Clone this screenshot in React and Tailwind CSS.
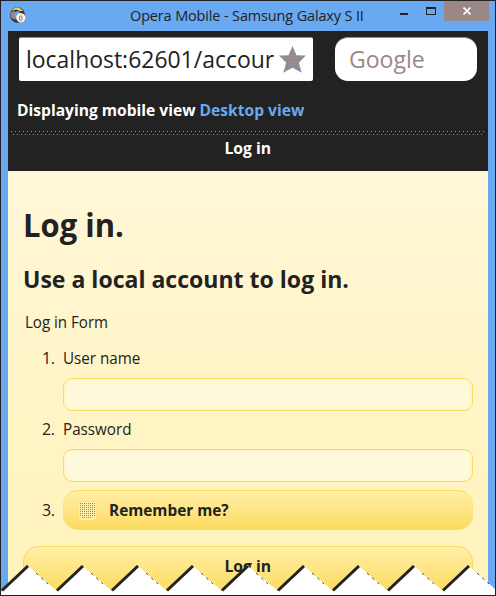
import React from "react";

const font = "font-['Open_Sans','Noto_Sans',sans-serif]";

function TitleBar() {
  return (
    <div className="flex h-[30px] shrink-0 items-start">
      <svg className="ml-[9px] mt-[6px] shrink-0" width="16" height="17" viewBox="0 0 16 17">
        <ellipse cx="7.500" cy="8" rx="5.400" ry="5.700" fill="none" stroke="#3a3230" strokeWidth="4" />
        <path d="M2 4C5-1 10 0 13 4L10 4 6 2.500Z" fill="#e9d27a" />
        <path d="M1 5l4-1-1 5 2 4C1 12 0 9 1 5Z" fill="#9b8785" />
        <circle cx="10.8" cy="10.8" r="4.6" fill="#fff8dc" />
        <rect x="9.6" y="8.8" width="2.4" height="4.6" rx="1" fill="none" stroke="#7b6c66" />
      </svg>
      <div className="ml-[104px] mt-[5px] w-[265px] whitespace-nowrap text-[14.5px] leading-5">
        <span className="tracking-[-0.15px]">Opera Mobile - Samsung Galaxy S II</span>
      </div>
      <div className="mt-[12px] ml-[5px] h-[2px] w-2 bg-[#222]" />
      <div className="ml-[18px] mt-[6px] h-2 w-[10px] border border-t-2 border-[#222]" />
      <div className="ml-[8px] flex h-5 w-[45px] items-center justify-center bg-[#9b8785]">
        <svg width="8" height="8" viewBox="0 0 8 8" stroke="#fff" strokeWidth="1.7">
          <path d="M.5.5l7 7m0-7l-7 7" />
        </svg>
      </div>
    </div>
  );
}

function Header() {
  return (
    <header className="flex h-[140px] shrink-0 flex-col bg-[#222] text-white">
      <div className="flex pt-[6px] pl-[11px]">
        <div className="flex h-11 w-[294px] items-center overflow-hidden rounded-[2px] border-t border-[#9b8785] bg-white pl-[7px] text-[#222]">
          <div className="-mt-[3px] w-[248px] overflow-hidden whitespace-nowrap text-[24px] leading-[41px]">
            <span className="inline-block origin-left scale-x-[0.956]">localhost:62601/accour</span>
          </div>
          <svg className="ml-[5px]" width="27" height="27" viewBox="0 0 27 27">
            <defs>
              <pattern id="dots" width="3" height="3" patternUnits="userSpaceOnUse">
                <rect width="3" height="3" fill="#9b8785" />
                <rect x="0" y="0" width="1" height="1" fill="#68a9f1" />
              </pattern>
            </defs>
            <path d="M13.500 0l4 9.200 9.300.3-7 7.200 3 10-9.300-5L4.200 26.700l3-10L0 9.500l9.500-.3Z" fill="url(#dots)" />
          </svg>
        </div>
        <div className="ml-[22px] h-11 w-[142px] rounded-[13px] border-t border-[#9b8785] bg-white pl-[14px] text-[24px] leading-[41px] text-[#9b8785]">
          <span className="inline-block origin-left scale-x-[0.96]">Google</span>
        </div>
      </div>
      <div className="mt-[18px] h-[22px] whitespace-nowrap pl-[9px] text-[16px] font-bold leading-[22px]">
        <div className="inline-block origin-left scale-x-[0.974]">
          <span>Displaying mobile view </span>
          <a className="text-[#68a9f1]">Desktop view</a>
        </div>
      </div>
      <svg className="ml-[3px] mt-[10px] shrink-0" width="474" height="4">
        <path d="M0 .5H474M2 3.500H474" stroke="#9b8785" strokeDasharray="1 3" />
      </svg>
      <div className="mt-[2px] pr-px text-center text-[16px] font-bold leading-[22px]">
        <span className="inline-block scale-x-[0.98]">Log in</span>
      </div>
    </header>
  );
}

function Field({ number, label }) {
  return (
    <li className="h-[71px]">
      <div className="flex h-5 text-[16px] leading-5">
        <span className="w-[21px] tracking-[-0.5px]">{number}.</span>
        <span className="origin-left scale-x-[0.95]">{label}</span>
      </div>
      <div className="ml-[21px] mt-[10px] h-[33px] w-[410px] rounded-[9px] border border-[#f9dc5c] bg-[#fff9dc] shadow-[inset_0_0_4px_#fff1b6]" />
    </li>
  );
}

function TornEdge() {
  const peaks = [28, 83, 138, 193, 248, 304, 359, 414, 469];
  const outline = peaks.map((x) => `L${x - 26} 26L${x} 1`).join("");
  return (
    <svg className="absolute bottom-0 left-0" width="494" height="30" viewBox="1 0 494 30">
      <path d={`M1 30V26${outline}L495 24V30Z`} fill="#fff" />
      {peaks.map((x) => (
        <g key={x} stroke="#222" fill="none">
          <path d={`M${x - 26} 25.500L${x} 1`} strokeWidth="3" />
          <path d={`M${x + 8} 8L${x + 20} 19`} strokeWidth="0.8" strokeDasharray="3 4" />
        </g>
      ))}
    </svg>
  );
}

export default function App() {
  return (
    <div className={`relative flex h-[596px] w-[496px] flex-col overflow-hidden border border-[#222] bg-[#68a9f1] text-[#222] ${font}`}>
      <TitleBar />
      <div className="mx-[7px] flex h-[564px] w-[480px] shrink-0 flex-col overflow-hidden">
        <Header />
        <main className="h-[424px] bg-linear-to-b from-[#fff8d8] via-[#fff4c4] via-60% to-[#fff3bc] pl-[15px]">
          <h1 className="origin-left scale-x-[0.968] pt-[32px] text-[32px] font-bold leading-[44px]">Log in.</h1>
          <h2 className="mt-[15px] origin-left scale-x-[0.96] text-[24px] font-bold leading-[34px]">Use a local account to log in.</h2>
          <p className="mt-[16px] origin-left scale-x-[0.945] pl-[2px] text-[16px] leading-5">Log in Form</p>
          <ol className="mt-[16px] pl-[19px]">
            <Field number="1" label="User name" />
            <Field number="2" label="Password" />
            <li className="flex h-10 items-center text-[16px]">
              <span className="w-[21px] tracking-[-0.5px]">3.</span>
              <div className="flex h-10 w-[410px] items-center rounded-[15px] border-t border-[#f9dc5c] bg-linear-to-b from-[#ffeea5] via-[#ffe584] to-[#fbdb5c] pl-[16px] font-bold">
                <svg width="17" height="18">
                  <rect width="17" height="18" rx="2" fill="#ffeea5" />
                  <path d="M1 1.500H16M1 3.500H16M1 5.500H16M1 7.500H16M1 9.500H16M1 11.500H16M1 13.500H16M3 15.500H13" stroke="#9b8785" strokeDasharray="1 1" />
                </svg>
                <span className="-mt-[2px] ml-[13px] origin-left scale-x-[0.96]">Remember me?</span>
              </div>
            </li>
          </ol>
          <div className="mt-[16px] h-[46px] w-[450px] rounded-t-[15px] border border-[#f9dc5c] bg-linear-to-b from-[#ffeea5] via-[#ffe584] to-[#fbdb5c] pt-[8px] text-center text-[16px] font-bold leading-[22px]">
            <span className="inline-block scale-x-[0.98]">Log in</span>
          </div>
        </main>
      </div>
      <TornEdge />
    </div>
  );
}
